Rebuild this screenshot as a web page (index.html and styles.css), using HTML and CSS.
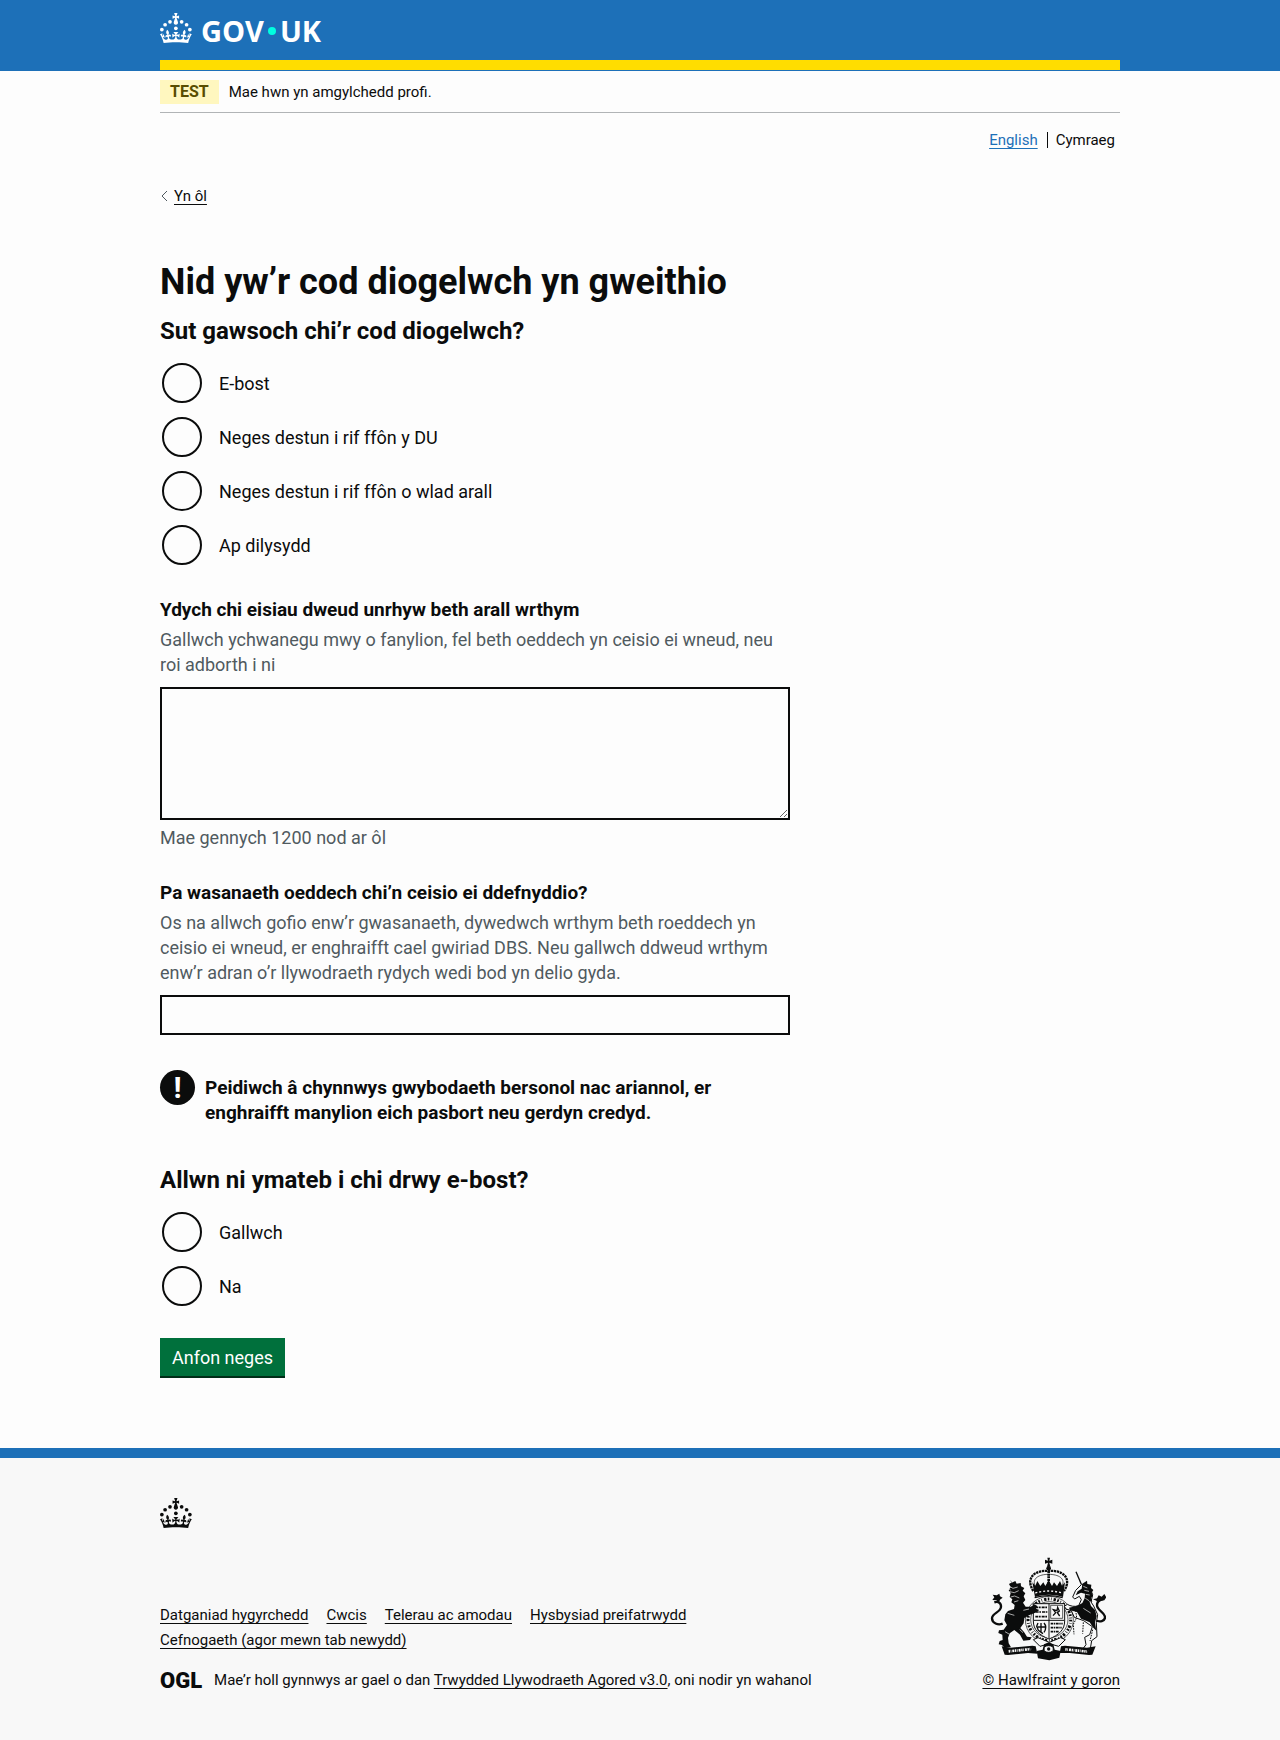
FILE: index.html
```
<!DOCTYPE html>
<html lang="cy">
<head>
<meta charset="utf-8">
<meta name="viewport" content="width=device-width, initial-scale=1">
<title>Nid yw’r cod diogelwch yn gweithio - GOV.UK</title>
<link rel="stylesheet" href="styles.css">
</head>
<body>
<svg class="sprite" aria-hidden="true">
  <symbol id="crown" viewBox="0 0 64 60">
    <circle cx="20" cy="17.6" r="3.7"/><circle cx="10.2" cy="23.5" r="3.7"/><circle cx="3.7" cy="33.2" r="3.7"/><circle cx="31.7" cy="30.6" r="3.7"/><circle cx="43.3" cy="17.6" r="3.7"/><circle cx="53.2" cy="23.5" r="3.7"/><circle cx="59.7" cy="33.2" r="3.7"/>
    <path d="M33.1,9.8c.2-.1.3-.3.5-.5l4.6,2.4v-6.8l-4.6,1.5c-.1-.2-.3-.3-.5-.5l1.9-5.9h-6.7l1.9,5.9c-.2.1-.3.3-.5.5l-4.6-1.5v6.8l4.6-2.4c.1.2.3.3.5.5l-2.6,8c-.9,2.8,1.2,5.7,4.1,5.7h0c3,0,5.1-2.9,4.1-5.7l-2.6-8ZM37,37.9s-3.4,3.8-4.1,6.1c2.2,0,4.2-.5,6.4-2.8l-.7,8.5c-2-2.8-4.4-4.1-5.7-3.8.1,3.1.5,6.7,5.8,7.2,3.7.3,6.7-1.5,7-3.8.4-2.6-2-4.3-3.7-1.6-1.4-4.5,2.4-6.1,4.9-3.2-1.9-4.5-1.8-7.7,2.4-10.9,3,4,2.6,7.3-1.2,11.1,2.4-1.3,6.2,0,4,4.6-1.2-2.8-3.7-2.2-4.2.2-.3,1.7.7,3.7,3,4.2,1.9.3,4.7-.9,7-5.9-1.3,0-2.4.7-3.9,1.7l2.4-8c.6,2.3,1.4,3.7,2.2,4.5.6-1.6.5-2.8,0-5.3l5,1.8c-2.6,3.6-5.2,8.7-7.3,17.5-7.4-1.1-15.7-1.7-24.5-1.7h0c-8.8,0-17.1.6-24.5,1.7-2.1-8.9-4.7-13.9-7.3-17.5l5-1.8c-.5,2.5-.6,3.7,0,5.3.8-.8,1.6-2.3,2.2-4.5l2.4,8c-1.5-1-2.6-1.7-3.9-1.7,2.3,5,5.2,6.2,7,5.9,2.3-.4,3.3-2.4,3-4.2-.5-2.4-3-3.1-4.2-.2-2.2-4.6,1.6-6,4-4.6-3.7-3.7-4.2-7.1-1.2-11.1,4.2,3.2,4.3,6.4,2.4,10.9,2.5-2.8,6.3-1.3,4.9,3.2-1.8-2.7-4.1-1-3.7,1.6.3,2.3,3.3,4.1,7,3.8,5.4-.5,5.7-4.2,5.8-7.2-1.3-.2-3.7,1-5.7,3.8l-.7-8.5c2.2,2.3,4.2,2.7,6.4,2.8-.7-2.3-4.1-6.1-4.1-6.1h10.6Z"/>
  </symbol>
</svg>

<header class="header">
  <div class="header-inner">
    <a class="logo" href="#" aria-label="GOV.UK">
      <svg class="crown" aria-hidden="true"><use href="#crown"/></svg>
      <span class="logo-text">GOV<span class="logo-dot"></span>UK</span>
    </a>
  </div>
</header>

<div class="container">
  <div class="phase-banner">
    <strong class="tag">TEST</strong>
    <span>Mae hwn yn amgylchedd profi.</span>
  </div>
  <nav aria-label="Dewis iaith">
    <ul class="languages">
      <li><a class="link" href="#" lang="en">English</a></li>
      <li>Cymraeg</li>
    </ul>
  </nav>
  <a class="back-link" href="#">
    <svg class="back-icon" viewBox="0 0 8 12" aria-hidden="true"><path d="M7 1 2 6l5 5"/></svg>
    <span>Yn ôl</span>
  </a>

  <main class="main">
    <h1>Nid yw’r cod diogelwch yn gweithio</h1>
    <form>
      <fieldset class="group">
        <legend>Sut gawsoch chi’r cod diogelwch?</legend>
        <div class="radios">
          <div class="radio"><input type="radio" name="method" id="m1"><label for="m1">E-bost</label></div>
          <div class="radio"><input type="radio" name="method" id="m2"><label for="m2">Neges destun i rif ffôn y DU</label></div>
          <div class="radio"><input type="radio" name="method" id="m3"><label for="m3">Neges destun i rif ffôn o wlad arall</label></div>
          <div class="radio"><input type="radio" name="method" id="m4"><label for="m4">Ap dilysydd</label></div>
        </div>
      </fieldset>

      <div class="group">
        <label class="label" for="more">Ydych chi eisiau dweud unrhyw beth arall wrthym</label>
        <div class="hint" id="more-hint">Gallwch ychwanegu mwy o fanylion, fel beth oeddech yn ceisio ei wneud, neu roi adborth i ni</div>
        <textarea class="field" id="more" rows="5" aria-describedby="more-hint more-count"></textarea>
        <div class="count" id="more-count">Mae gennych 1200 nod ar ôl</div>
      </div>

      <div class="group">
        <label class="label" for="service">Pa wasanaeth oeddech chi’n ceisio ei ddefnyddio?</label>
        <div class="hint" id="service-hint">Os na allwch gofio enw’r gwasanaeth, dywedwch wrthym beth roeddech yn ceisio ei wneud, er enghraifft cael gwiriad DBS. Neu gallwch ddweud wrthym enw’r adran o’r llywodraeth rydych wedi bod yn delio gyda.</div>
        <input class="field" type="text" id="service" aria-describedby="service-hint">
      </div>

      <div class="warning">
        <span class="warning-icon" aria-hidden="true">!</span>
        <strong>Peidiwch â chynnwys gwybodaeth bersonol nac ariannol, er enghraifft manylion eich pasbort neu gerdyn credyd.</strong>
      </div>

      <fieldset class="group">
        <legend>Allwn ni ymateb i chi drwy e-bost?</legend>
        <div class="radios">
          <div class="radio"><input type="radio" name="reply" id="r1"><label for="r1">Gallwch</label></div>
          <div class="radio"><input type="radio" name="reply" id="r2"><label for="r2">Na</label></div>
        </div>
      </fieldset>

      <button class="button" type="submit">Anfon neges</button>
    </form>
  </main>
</div>

<footer class="footer">
  <div class="container">
    <svg class="crown" aria-hidden="true"><use href="#crown"/></svg>
    <div class="footer-row">
      <div class="footer-main">
        <ul class="footer-links">
          <li><a href="#">Datganiad hygyrchedd</a></li>
          <li><a href="#">Cwcis</a></li>
          <li><a href="#">Telerau ac amodau</a></li>
          <li><a href="#">Hysbysiad preifatrwydd</a></li>
          <li><a href="#">Cefnogaeth (agor mewn tab newydd)</a></li>
        </ul>
        <div class="licence">
          <span class="ogl">OGL</span>
          <span>Mae’r holl gynnwys ar gael o dan <a href="#">Trwydded Llywodraeth Agored v3.0</a>, oni nodir yn wahanol</span>
        </div>
      </div>
      <div class="copyright">
        <svg class="arms" viewBox="60 36 348 312" aria-hidden="true">
          <!-- crown -->
          <path class="ink" d="M232 38h8l-2 9 9-3v12l-9-3 3 12h-10l3-12-9 3V44l9 3z"/>
          <circle class="ink" cx="236" cy="70" r="7"/>
          <path class="line" stroke-width="7" stroke-dasharray="7 2" d="M190 138C164 98 196 74 236 78c40-4 72 20 46 60"/>
          <path class="line" stroke-width="2" d="M197 126c-14-26 10-38 39-38s53 12 39 38"/>
          <path class="line" stroke-width="8" stroke-dasharray="6 2" d="M236 78v36"/>
          <path class="ink" d="M187 112l9 10 6-14 9 15 9-11 6 11 10-17 10 17 6-11 9 11 9-15 6 14 9-10-6 44c-28-9-56-9-84 0z"/>
          <path class="paper" stroke-width="4" stroke-dasharray="6 6" d="M196 144c27-8 53-8 80 0"/>
          <path class="line" stroke-width="4" d="M194 158c28-8 56-8 84 0"/>
          <!-- garter -->
          <ellipse class="line" stroke-width="2" cx="238" cy="224" rx="72" ry="70"/>
          <ellipse class="line" stroke-width="9" stroke-dasharray="5 5 2 6 7 4" cx="238" cy="224" rx="64" ry="62"/>
          <ellipse class="line" stroke-width="2" cx="238" cy="224" rx="56" ry="54"/>
          <!-- shield -->
          <path class="panel" stroke-width="3" d="M190 176h94v52c0 26-17 42-47 54-30-12-47-28-47-54z"/>
          <path class="line" stroke-width="3" d="M237 176v104M192 226h90"/>
          <path class="line" stroke-width="5" stroke-dasharray="9 2 5 3" d="M196 187h37M197 201h36M196 215h37"/>
          <path class="line" stroke-width="2" d="M242 181h36v39h-36z"/>
          <path class="line" stroke-width="4" d="M249 212l8-9-7-9 11 3 2-10 5 11-6 5 7 10"/>
          <path class="line" stroke-width="4" d="M204 234l-4 10 5 12 14 10M213 234v26M222 234c8 9 8 16 0 28M203 246h22"/>
          <path class="line" stroke-width="5" stroke-dasharray="8 2 4 2" d="M242 236h36M242 248h34M242 260h24"/>
          <!-- lion -->
          <path class="line" stroke-width="7" d="M98 236c-14 6-32-2-32-16 0-16 26-18 27-34 1-12-8-18-20-14"/>
          <path class="ink" d="M68 149l12 2 8-5 2 8 8 4-8 6-3 9-8-7-12-1 6-8z"/>
          <path class="ink" d="M119 104l6 9 11-5 4 8 12-2 1 10 10 5-5 8 8 8-5 9 5 11-7 8 8 12 17 0 9-7 9 5-4 8 10 4-12 8-16 6-17 10-2 16-10 14 11 12 9 14 14 2-5 8-20 2-10-18-17-14-14 10-5 14 2 16 7 12-19 1-8-8-10-2 3-10 9-3-1-16-12-5 2-8 14-2 10-14-8-14 3-18 8-10 18-6 2-12-10-8 3-9-8-7 3-12-6-8 6-9-5-10 9-5z"/>
          <path class="paper" stroke-width="2" d="M118 124l11 6 14-4M119 140l14 3 13-6M122 156l12-3 14 6M132 171l13-4M117 132l5 3M113 205l20 6M160 196l17-4M105 260l12 7M149 254l10 9"/>
          <!-- unicorn -->
          <path class="line" stroke-width="4" d="M318 80l16 38"/>
          <path class="line" stroke-width="7" d="M374 225c16 8 31 3 31-8 0-16-24-20-24-36 0-10 8-17 20-20"/>
          <path class="ink" d="M386 151l9 4 8-8 6 10-6 9-11 2-9 7-4-8-10-4 12-3z"/>
          <path class="panel" stroke-width="3" d="M335 118l-18 18-9 20 6 6 14-8 6 10-8 18c-12 4-24 2-34-4l-9 6 5 8 16 5 9 20 28 10 26 18-8 24-15 8 4 22-9 12h22l4-24 16-12-2-42 4-24-12-26-8-12 5-22-8-20z"/>
          <path class="ink" d="M337 116l14-9 1 10 12 2-1 10 7 6-5 8 4 9-6 7 4 11-9-2 5 15 12 12 5 18-5 20 4 24-9-9-11-16-26-11-12-20-21-5-3-8 25-6 15-8 7-14 1-14-12-3-16 8 6-12 12-8z"/>
          <path class="paper" stroke-width="2" d="M340 124l12 5M343 136l14 3M347 148l12 2M346 160l11 7M340 190l22 14"/>
          <path class="line" stroke-width="3" stroke-dasharray="5 3" d="M316 188l4 30-10 20 2 30M340 232l-2 34M368 254l-8 34"/>
          <!-- motto and base -->
          <path class="ink" d="M95 304l26 4 66-6 10 2 5 22-28-2-60 6-10-1z"/>
          <path class="ink" d="M377 304l-26 4-66-6-12 2-4 20 30 0 58 6 10-1z"/>
          <path class="paper" stroke-width="8" stroke-dasharray="4 2 2 3 6 2" d="M116 319l68-7M286 313l68 7"/>
          <path class="panel" stroke-width="3" d="M190 284l14-6 34 14 34-14 14 6-20 20-28-8-28 8z"/>
          <path class="ink" d="M200 318l18-4 4-16 14-6 14 6 4 16 18 4-4 20-30 8-34-6z"/>
          <path class="panel" stroke-width="3" d="M222 312a14 10 0 1 0 28 0 14 10 0 1 0-28 0M212 332h14M246 332h14"/>
          <circle class="ink" cx="236" cy="312" r="5"/>
        </svg>
        <a href="#">© Hawlfraint y goron</a>
      </div>
    </div>
  </div>
</footer>
</body>
</html>
```

FILE: styles.css
```
* { box-sizing: border-box; }

body {
  margin: 0;
  background: #fdfdfd;
  color: #0b0c0c;
  font-family: Roboto, "Liberation Sans", sans-serif;
  font-size: 18px;
  line-height: 25px;
}

ul { list-style: none; margin: 0; padding: 0; }
a { color: inherit; text-decoration-thickness: 1px; text-underline-offset: 3px; }
.sprite { display: none; }

.container,
.header-inner { max-width: 960px; margin: 0 auto; }

.header { background: #1d70b8; color: #fff; padding-bottom: 1px; }
.header-inner { padding: 12px 0 6px; border-bottom: 10px solid #ffdd00; }
.logo { display: inline-flex; gap: 9px; height: 42px; text-decoration: none; vertical-align: top; }
.crown { display: block; width: 32px; height: 30px; margin-top: 1px; fill: currentColor; }
.logo-text { display: flex; align-items: center; height: 38px; font: bold 29px/38px "Open Sans", sans-serif; }
.logo-dot { width: 8px; height: 8px; margin: 0 4px; border-radius: 50%; background: #00ffe0; }

.phase-banner {
  display: flex;
  align-items: center;
  gap: 10px;
  padding: 9px 0 8px;
  border-bottom: 1px solid #b1b4b6;
  font-size: 15px;
  line-height: 24px;
}
.tag { padding: 0 10px; background: #fff7bf; color: #594d00; font-size: 16px; }

.languages { display: flex; justify-content: flex-end; margin-top: 17px; padding-right: 5px; font-size: 15px; line-height: 20px; }
.languages li + li { position: relative; margin-left: 9px; padding-left: 9px; }
.languages li + li::before { content: ""; position: absolute; left: 0; top: 2px; height: 16px; border-left: 1px solid #0b0c0c; }
.link { color: #1d70b8; }

.back-link { display: inline-flex; align-items: center; gap: 6px; margin-top: 36px; font-size: 15px; line-height: 20px; text-decoration: none; vertical-align: top; }
.back-link span { text-decoration: underline; text-decoration-thickness: 1px; text-underline-offset: 3px; }
.back-icon { width: 8px; height: 12px; fill: none; stroke: #505a5f; }

.main { max-width: 630px; padding: 56px 0 70px; }
h1 { margin: 0 0 14px; font-size: 36px; line-height: 40px; }
fieldset { min-width: 0; margin: 0; padding: 0; border: 0; }
legend { padding: 0 0 15px; font-size: 24px; font-weight: bold; line-height: 30px; }
.group { margin-bottom: 30px; }

.radios { display: grid; gap: 10px; }
.radio { display: flex; align-items: center; height: 44px; padding-left: 2px; }
.radio input { appearance: none; width: 40px; height: 40px; margin: 0; border: 2px solid #0b0c0c; border-radius: 50%; }
.radio label { padding: 9px 17px; }

.label { display: block; margin-bottom: 5px; font-size: 19px; font-weight: bold; }
.hint { margin-bottom: 10px; color: #505a5f; }
.count { margin-top: 5px; color: #505a5f; }
.field { display: block; width: 100%; height: 40px; padding: 5px; border: 2px solid #0b0c0c; border-radius: 0; background: transparent; font: inherit; }
textarea.field { height: 133px; resize: vertical; }

.warning { display: flex; gap: 10px; margin: 35px 0 40px; }
.warning strong { max-width: 520px; padding-top: 5px; font-size: 19px; }
.warning-icon { flex: none; width: 35px; height: 35px; border-radius: 50%; background: #0b0c0c; color: #fff; font-size: 30px; font-weight: bold; line-height: 35px; text-align: center; }

.button { display: block; height: 38px; padding: 0 12px; border: 0; background: #00703c; box-shadow: 0 2px 0 #002d18; color: #fff; font: inherit; margin-bottom: 2px; }

.footer { border-top: 10px solid #1d70b8; background: #f8f8f8; padding: 39px 0 47px; font-size: 15px; }
.footer-row { display: flex; justify-content: space-between; align-items: flex-end; gap: 30px; margin-top: 29px; }
.footer-main { flex: 1; }
.footer-links { display: flex; flex-wrap: wrap; gap: 0 18px; max-width: 620px; margin-bottom: 15px; }
.licence { display: flex; align-items: center; gap: 12px; }
.ogl { font-size: 22px; font-weight: 900; }
.copyright { display: flex; flex-direction: column; align-items: flex-end; gap: 7px; }

.arms { width: 116px; height: 104px; margin-right: 14px; }
.arms .ink { fill: #0b0c0c; }
.arms .line { fill: none; stroke: #0b0c0c; }
.arms .paper { fill: none; stroke: #f8f8f8; }
.arms .panel { fill: #f8f8f8; stroke: #0b0c0c; }
```
